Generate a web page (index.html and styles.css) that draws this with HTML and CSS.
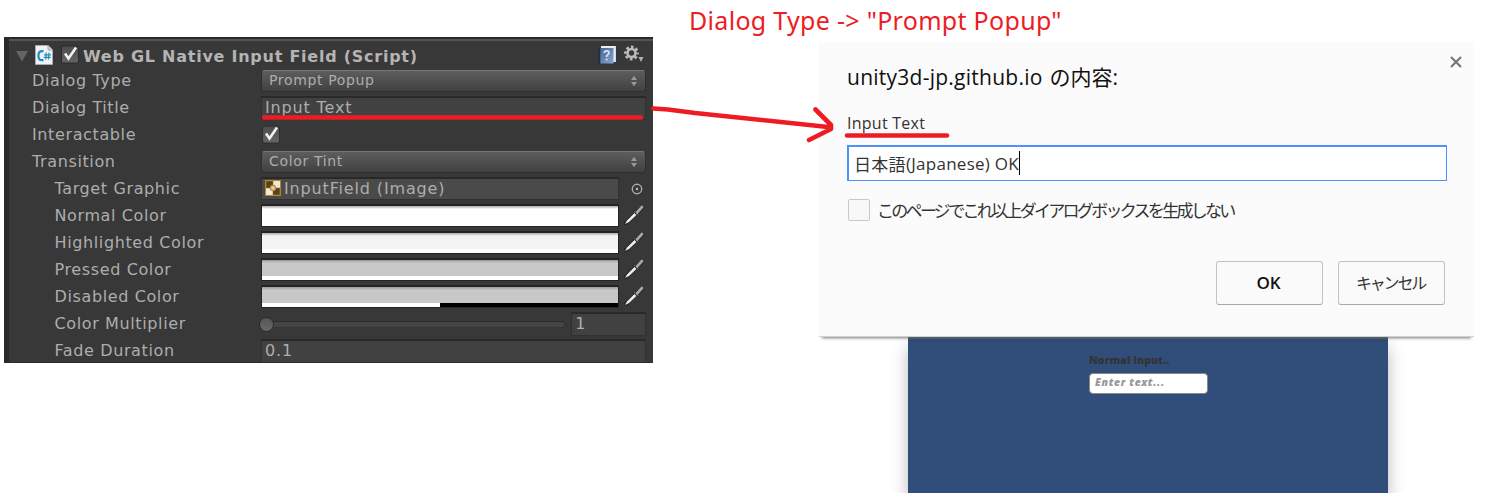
FILE: index.html
```html
<!DOCTYPE html>
<html lang="ja">
<head>
<meta charset="utf-8">
<title>Dialog Type</title>
<link rel="stylesheet" href="styles.css">
</head>
<body>
<svg class="defs" width="0" height="0">
  <defs>
    <linearGradient id="box" x1="0" y1="0" x2="0" y2="1"><stop offset="0" stop-color="#4c4c4c"/><stop offset="1" stop-color="#656565"/></linearGradient>
    <linearGradient id="book" x1="0" y1="0" x2="1" y2="1"><stop offset="0" stop-color="#4a6690"/><stop offset="1" stop-color="#86a5d4"/></linearGradient>
    <symbol id="check" viewBox="0 0 20 20">
      <rect x="1.500" y="1" width="17" height="17" rx="2" fill="url(#box)" stroke="#2b2b2b"/>
      <path d="M5 8.500 8.500 13.500 16 2.500" fill="none" stroke="#f0f0f0" stroke-width="2.600"/>
    </symbol>
    <symbol id="updown" viewBox="0 0 8 12"><path d="M1 5h6L4 .8zM1 7h6L4 11.2z" fill="#989898"/></symbol>
    <symbol id="dropper" viewBox="0 0 22 22">
      <path d="M3 19 13 9" stroke="#262626" stroke-width="4" stroke-linecap="round"/>
      <path d="M2 20 4 16.5 12 8.5 14 10.5 6 18z" fill="#eee"/>
      <path d="M11 6.5 16 11.5" stroke="#2a2a2a" stroke-width="2.600"/>
      <path d="M11.500 7 15.500 11" stroke="#777" stroke-width="1.600"/>
      <path d="M14 8.500 19 3.500" stroke="#262626" stroke-width="4" stroke-linecap="round"/>
      <path d="M14 8.500 19 3" stroke="#a8a8a8" stroke-width="2.700" stroke-linecap="round"/>
    </symbol>
  </defs>
</svg>
<main class="stage">
  <section class="inspector">
    <header class="head">
      <svg class="fold" viewBox="0 0 12 12"><path d="M0 1h12L6 11.500z" fill="#656565"/></svg>
      <svg class="script" viewBox="0 0 18 20"><path d="M.5.500h12.500l4.500 4.500v14.500H.5z" fill="#f0f3f5" stroke="#a3adb3"/><path d="M13 .5V5h4.500" fill="#cbd3d8" stroke="#a3adb3"/><path d="M8.500 6.200H7Q3.400 6.200 3.400 10.700T7 15.200H8.500" fill="none" stroke="#258bbf" stroke-width="2.200"/><path d="M11.300 7.500l-.6 7M14 7.500l-.6 7M9 9.800h7M8.700 12.400h7" stroke="#258bbf" stroke-width="1.200"/></svg>
      <svg class="tick"><use href="#check"/></svg>
      <h1 class="title">Web GL Native Input Field (Script)</h1>
      <svg class="help" viewBox="0 0 20 20"><path d="M3 1h15.500v16H3z" fill="#e8edf5"/><path d="M18.500 1v16L16 19" fill="none" stroke="#26385a" stroke-width="1.200"/><path d="M2 3h13.500V18.500H2z" fill="url(#book)"/><path d="M1.500 2.500v16.500" stroke="#1c2e4d" stroke-width="1.600"/><path d="M6.300 8c0-3 4.700-2.800 4.700-.2 0 2-2.400 1.800-2.400 4.100M8.600 13.400v2" fill="none" stroke="#d7e3f5" stroke-width="1.700"/></svg>
      <svg class="gear" viewBox="0 0 20 18"><circle cx="7.500" cy="8" r="6" fill="none" stroke="#b7b7b7" stroke-width="2.800" stroke-dasharray="2.600 2.112" stroke-dashoffset="1.300"/><circle cx="7.500" cy="8" r="4" fill="none" stroke="#bcbcbc" stroke-width="2.600"/><path d="M14.500 12h5L17 17z" fill="#b0b0b0"/></svg>
    </header>
    <div class="row"><span class="label">Dialog Type</span><div class="popup">Prompt Popup<svg class="arrows"><use href="#updown"/></svg></div></div>
    <div class="row"><span class="label">Dialog Title</span><div class="field">Input Text</div></div>
    <div class="row"><span class="label">Interactable</span><svg class="tick"><use href="#check"/></svg></div>
    <div class="row"><span class="label">Transition</span><div class="popup">Color Tint<svg class="arrows"><use href="#updown"/></svg></div></div>
    <div class="row sub"><span class="label">Target Graphic</span><div class="field object"><svg class="image-icon" viewBox="0 0 16 16"><path d="M.7.700h14.600v14.600H.7z" fill="#534324" stroke="#bc861f" stroke-width="1.300"/><path d="M8 1h7v7H8zM1 8h7v7H1z" fill="#eee9df"/><path d="M8 1v14M1 8h14" stroke="#a77418" stroke-width=".6"/><circle cx="8" cy="8" r="2.600" fill="#d8cbb0" stroke="#c18a20" stroke-width="1.100"/></svg>InputField (Image)</div><svg class="picker" viewBox="0 0 12 12"><circle cx="6" cy="6" r="4.700" fill="none" stroke="#aaa" stroke-width="1.400"/><circle cx="6" cy="6" r="1.200" fill="#bbb"/></svg></div>
    <div class="row sub"><span class="label">Normal Color</span><div class="swatch white"></div><svg class="dropper"><use href="#dropper"/></svg></div>
    <div class="row sub"><span class="label">Highlighted Color</span><div class="swatch light"></div><svg class="dropper"><use href="#dropper"/></svg></div>
    <div class="row sub"><span class="label">Pressed Color</span><div class="swatch gray"></div><svg class="dropper"><use href="#dropper"/></svg></div>
    <div class="row sub"><span class="label">Disabled Color</span><div class="swatch gray half"></div><svg class="dropper"><use href="#dropper"/></svg></div>
    <div class="row sub"><span class="label">Color Multiplier</span><div class="slider"><i class="knob"></i></div><div class="field number">1</div></div>
    <div class="row sub"><span class="label">Fade Duration</span><div class="field">0.1</div></div>
  </section>
  <section class="result">
    <p class="caption">Dialog Type -&gt; "Prompt Popup"</p>
    <div class="dialog">
      <div class="dialog-head"><h2 class="origin"><span class="host">unity3d-jp.github.io</span> <span class="content">の内容:</span></h2><svg class="close" viewBox="0 0 12 12"><path d="M1 1l10 10M11 1 1 11" stroke="#777" stroke-width="2.200"/></svg></div>
      <p class="message">Input Text</p>
      <div class="prompt"><span class="nihongo">日本語</span><span class="answer">(Japanese) OK</span><i class="caret"></i></div>
      <div class="suppress"><i class="checkbox"></i><span class="suppress-text">このページでこれ以上ダイアログボックスを生成しない</span></div>
      <div class="actions"><button class="button ok">OK</button><button class="button"><span class="cancel">キャンセル</span></button></div>
    </div>
    <div class="page">
      <div class="game"><p class="game-label">Normal Input..</p><div class="game-input">Enter text...</div></div>
    </div>
  </section>
  <svg class="marks" width="1507" height="500" viewBox="0 0 1507 500"><path d="M264 117.500H641M653.500 108.500 668 109.500 695 113 828 127M815.500 109.500 831 125 831 129 809 140M847 135.500H947" fill="none" stroke="#ed1c24" stroke-width="4.600" stroke-linecap="round" stroke-linejoin="round"/></svg>
</main>
</body>
</html>
```
FILE: styles.css
```css
* { box-sizing: border-box; }
body { margin: 0; background: #fff; }
h1, h2, p { margin: 0; font-weight: normal; }
svg { display: block; flex: none; }
.defs { position: absolute; }
.stage { position: relative; display: flex; width: 1507px; height: 500px; overflow: hidden; padding-left: 4px; }
.marks { position: absolute; left: 0; top: 0; }

.inspector { width: 649px; height: 326px; margin-top: 37px; padding: 6px 7px 0 23px; overflow: hidden; flex: none; border-left: 5px solid #292929; border-bottom: 1px solid #2a2a2a; background: linear-gradient(#292929 0 2px, #545454 2px 4px, #383838 4px); color: #adadad; font: 16px/27px "DejaVu Sans", Verdana, sans-serif; letter-spacing: .62px; white-space: nowrap; }
.head { display: flex; align-items: center; height: 24px; margin-left: -16px; }
.fold { width: 12px; height: 12px; margin-top: 1px; }
.script { width: 18px; height: 20px; margin-left: 7px; }
.head .tick { margin-left: 7px; }
.tick { width: 20px; height: 20px; }
.title { width: 515px; margin: 2px 0 0 3px; font-size: 16px; font-weight: bold; letter-spacing: .75px; color: #b4b4b4; }
.help { width: 20px; height: 20px; }
.gear { width: 20px; height: 18px; margin-left: 6px; margin-top: -3px; }
.row { display: flex; align-items: center; height: 27px; }
.label { width: 229px; flex: none; }
.sub .label { padding-left: 22.5px; }
.popup { display: flex; align-items: center; justify-content: space-between; width: 385px; height: 22px; padding: 0 7px 0 7px; border: 1px solid #303030; border-top-color: #777; border-radius: 4px; background: linear-gradient(#5d5d5d, #414141); font-size: 14px; letter-spacing: .65px; }
.arrows { width: 8px; height: 12px; }
.field { display: flex; align-items: center; width: 386px; height: 24px; padding: 0 0 2px 3px; border: 1px solid #303030; border-top: 2px solid #292929; background: #414141; letter-spacing: .85px; }
.object { width: 358px; height: 23px; background: #4a4a4a; }
.image-icon { width: 16px; height: 16px; margin-right: 3px; }
.picker { width: 12px; height: 12px; margin-left: 12px; }
.swatch { width: 358px; height: 23px; margin-bottom: 1px; border: 1px solid #242424; border-top-width: 2px; }
.white { background: linear-gradient(#aaa, #fff 3px); }
.light { background: linear-gradient(#aaa, #f4f4f4 3px 16px, #fff 16px); }
.gray { background: linear-gradient(#999, #c8c8c8 3px 16px, #fff 16px); }
.half { background: linear-gradient(90deg, transparent 50%, #000 50%) bottom / 100% 4px no-repeat, linear-gradient(#999, #c8c8c8 3px 16px, #fff 16px); }
.dropper { width: 22px; height: 22px; margin: 0 0 1px 4px; }
.slider { display: flex; align-items: center; width: 305px; height: 7px; margin: 2px 6px 0 0; border: 1px solid #343434; border-top-color: #292929; border-radius: 3px; background: #454545; }
.knob { width: 15px; height: 15px; margin-left: -3px; border: 1px solid #292929; border-radius: 50%; background: linear-gradient(#555, #696969); }
.number { width: 75px; }

.result { width: 850px; font-family: "Open Sans", "Noto Sans", "Noto Sans CJK JP", sans-serif; white-space: nowrap; }
.caption { height: 42px; padding-left: 36px; color: #ed1c24; font: 25px/41px "Noto Sans", "Noto Sans CJK JP", sans-serif; letter-spacing: .3px; }
.dialog { position: relative; width: 655px; height: 295px; margin-left: 166px; padding: 0 27px 0 28px; background: #fbfbfb; border-bottom: 1px solid #d0d0d0; box-shadow: 0 4px 3px -3px #777; color: #111; }
.dialog-head { display: flex; height: 67px; padding-top: 14px; justify-content: space-between; }
.origin { display: flex; gap: 7px; font-size: 21px; line-height: 42px; }
.host { letter-spacing: .25px; }
.close { width: 12px; height: 12px; margin-right: -15px; }
.message { font-size: 16px; line-height: 28px; letter-spacing: .25px; color: #333; }
.prompt { display: flex; align-items: center; width: 600px; height: 36px; margin-top: 8px; padding: 0 5px; border: 1px solid #4d90fe; border-width: 2px 1px 1px 2px; background: #fff; font-size: 17px; color: #333; }
.nihongo { letter-spacing: .3px; }
.answer { letter-spacing: .27px; }
.caret { width: 1px; height: 24px; margin: 0 0 2px; background: #000; }
.suppress { display: flex; align-items: center; height: 57px; font-size: 17px; color: #333; }
.checkbox { width: 22px; height: 22px; margin-left: 1px; border: 1px solid #c9c9c9; border-radius: 2px; background: #f8f8f8; }
.suppress-text { margin-left: 7px; letter-spacing: -2.7px; }
.actions { display: flex; gap: 15px; justify-content: flex-end; margin: 23px 2px 0 0; }
.button { width: 107px; height: 44px; padding: 0 2px 2px 0; border: 1px solid #c2c2c2; border-bottom-color: #aaa; border-radius: 3px; background: #fafafa; color: #111; font: 17px "Open Sans", "Noto Sans CJK JP", sans-serif; }
.ok { font-weight: 600; }
.cancel { font-size: 16px; letter-spacing: -2.2px; color: #333; }
.page { width: 560px; height: 156px; margin-left: 215px; padding: 0 40px; overflow: hidden; }
.game { height: 156px; padding: 15px 181px; background: linear-gradient(#263c5e, #304e79 5px); box-shadow: 0 10px 16px #bbb; font: 800 10.5px/16px "Open Sans", sans-serif; color: #333; }
.game-label { font-weight: 800; letter-spacing: .1px; }
.game-input { width: 119px; height: 21px; margin-top: 5px; padding-left: 5px; border: 1px solid #888; border-radius: 4px; background: #fff; color: #999; font-style: italic; line-height: 17px; letter-spacing: .6px; }
```
